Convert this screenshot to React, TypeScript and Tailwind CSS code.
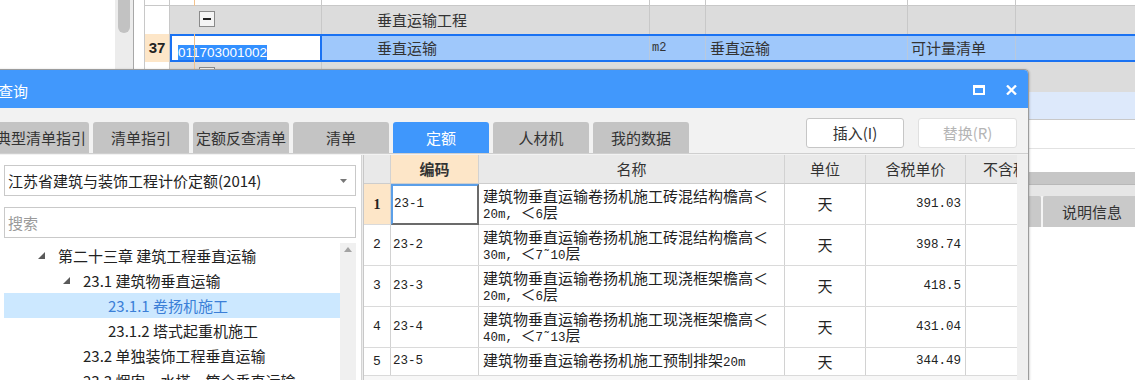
import React from "react";

type Seg = { t: string; m?: boolean };

const rows: { n: string; code: string; l1: string; l2: Seg[] | null; price: string }[] = [
  {
    n: "1",
    code: "23-1",
    l1: "建筑物垂直运输卷扬机施工砖混结构檐高＜",
    l2: [{ t: "20m, ", m: true }, { t: "＜" }, { t: "6", m: true }, { t: "层" }],
    price: "391.03",
  },
  {
    n: "2",
    code: "23-2",
    l1: "建筑物垂直运输卷扬机施工砖混结构檐高＜",
    l2: [{ t: "30m, ", m: true }, { t: "＜" }, { t: "7˜10", m: true }, { t: "层" }],
    price: "398.74",
  },
  {
    n: "3",
    code: "23-3",
    l1: "建筑物垂直运输卷扬机施工现浇框架檐高＜",
    l2: [{ t: "20m, ", m: true }, { t: "＜" }, { t: "6", m: true }, { t: "层" }],
    price: "418.5",
  },
  {
    n: "4",
    code: "23-4",
    l1: "建筑物垂直运输卷扬机施工现浇框架檐高＜",
    l2: [{ t: "40m, ", m: true }, { t: "＜" }, { t: "7˜13", m: true }, { t: "层" }],
    price: "431.04",
  },
  {
    n: "5",
    code: "23-5",
    l1: "建筑物垂直运输卷扬机施工预制排架",
    l2: null,
    price: "344.49",
  },
];

const tabs = ["典型清单指引", "清单指引", "定额反查清单", "清单", "定额", "人材机", "我的数据"];

function Tri() {
  return (
    <svg width="7" height="7" viewBox="0 0 7 7" className="shrink-0">
      <polygon points="7,0 7,7 0,7" fill="#5a5a5a" />
    </svg>
  );
}

function MinusBox() {
  return (
    <div className="w-[16px] h-[16px] border border-[#8a8a8a] bg-[#f4f4f4] flex items-center justify-center">
      <div className="w-[8px] h-[1.5px] bg-[#222]" />
    </div>
  );
}

export default function App() {
  return (
    <div className="relative w-[1135px] h-[380px] overflow-hidden bg-white font-['Noto_Sans_CJK_SC',sans-serif] text-[#222]">
      {/* ===== background application ===== */}
      <div className="flex h-full">
        <div className="w-[145px] shrink-0 flex">
          <div className="w-[115px] bg-white" />
          <div className="w-[18px] bg-[#ececec]">
            <div className="mx-[3px] h-[33px] bg-[#c2c2c2] rounded-b-[6px]" />
          </div>
          <div className="w-[1px] bg-[#a8a8a8]" />
          <div className="flex-1 bg-white border-r border-[#c8c8c8]" />
        </div>
        <div className="flex-1 flex flex-col relative">
          {/* tree line */}
          <div className="absolute left-[49px] top-0 w-[1px] h-[70px] bg-[#f3c28c]" />
          {/* row A */}
          <div className="h-[6px] flex border-b border-[#c8c8c8]">
            <div className="w-[25px] border-r border-[#c8c8c8]" />
            <div className="w-[152px] border-r border-[#c8c8c8]" />
            <div className="w-[328px] border-r border-[#c8c8c8]" />
            <div className="w-[56px] border-r border-[#c8c8c8]" />
            <div className="w-[202px] border-r border-[#c8c8c8]" />
            <div className="w-[108px] border-r border-[#c8c8c8]" />
            <div className="flex-1" />
          </div>
          {/* row B */}
          <div className="h-[28px] flex">
            <div className="w-[25px] bg-white border-r border-[#c8c8c8]" />
            <div className="w-[152px] bg-[#dcdcdc] border-r border-[#c8c8c8] pl-[29px] pt-[5px] relative">
              <MinusBox />
            </div>
            <div className="w-[328px] bg-[#dcdcdc] border-r border-[#c8c8c8] pl-[55px] flex items-center text-[15px] leading-[18px] text-[#333]">
              垂直运输工程
            </div>
            <div className="w-[56px] bg-[#dcdcdc] border-r border-[#c8c8c8]" />
            <div className="w-[202px] bg-[#dcdcdc] border-r border-[#c8c8c8]" />
            <div className="w-[108px] bg-[#dcdcdc] border-r border-[#c8c8c8]" />
            <div className="flex-1 bg-[#dcdcdc]" />
          </div>
          {/* row C (selected) */}
          <div className="h-[28px] flex">
            <div className="w-[25px] bg-[#fde6c8] border-r border-[#c8c8c8] flex items-center justify-center font-['Liberation_Sans',sans-serif] font-bold text-[15px] text-[#222]">
              37
            </div>
            <div className="flex-1 flex border-y-2 border-[#1a72f2] bg-[#9fc8fb]">
              <div className="w-[152px] bg-white border-x-2 border-[#1a72f2] pl-[6px] pt-[2px]">
                <span className="bg-[#3390ff] text-white font-['Liberation_Sans',sans-serif] text-[13.5px] leading-[15px] inline-block">
                  011703001002
                </span>
              </div>
              <div className="w-[328px] border-r border-[#b9c9dc] pl-[55px] flex items-center text-[15px] leading-[18px] text-[#333]">
                垂直运输
              </div>
              <div className="w-[56px] border-r border-[#b9c9dc] pl-[2px] flex items-center font-['Liberation_Mono',monospace] text-[12px] text-[#333]">
                m2
              </div>
              <div className="w-[202px] border-r border-[#b9c9dc] pl-[4px] flex items-center text-[15px] leading-[18px] text-[#333]">
                垂直运输
              </div>
              <div className="w-[108px] border-r border-[#b9c9dc] pl-[3px] flex items-center text-[15px] leading-[18px] text-[#333]">
                可计量清单
              </div>
              <div className="flex-1" />
            </div>
          </div>
          {/* row D */}
          <div className="h-[30px] flex">
            <div className="w-[25px] bg-white border-r border-[#c8c8c8]" />
            <div className="w-[152px] bg-[#dcdcdc] border-r border-[#c8c8c8] pl-[29px] pt-[5px]">
              <MinusBox />
            </div>
            <div className="flex-1 bg-[#dcdcdc]" />
          </div>
          {/* other rows visible on right */}
          <div className="h-[28px] bg-[#dde9fb] border-b border-[#c8c8c8]" />
          <div className="h-[29px] bg-white border-b border-[#e2e2e2]" />
          <div className="h-[23px] bg-white" />
          <div className="h-[13px] bg-[#c6c6c6] border-b border-[#b8b8b8]" />
          <div className="h-[11px] bg-[#e6e6e6]" />
          <div className="h-[31px] flex justify-end bg-[#e6e6e6]">
            <div className="w-[96px] bg-[#c9c9c9] rounded-t-[2px]" />
            <div className="w-[2px] bg-[#f4f4f4]" />
            <div className="w-[92px] bg-[#c9c9c9] rounded-tl-[2px] pl-[19px] flex items-center text-[15px] leading-[18px] text-[#333]">
              说明信息
            </div>
          </div>
          <div className="flex-1 bg-white" />
        </div>
      </div>

      {/* ===== dialog window ===== */}
      <div className="absolute left-[-8px] top-[69px] w-[1037px] h-[330px] bg-[#f2f2f2] border-t border-r border-[#9c9c9c] rounded-tr-[5px] overflow-hidden flex flex-col shadow-[1px_0_2px_rgba(0,0,0,0.15)]">
        {/* title bar */}
        <div className="h-[38px] shrink-0 bg-[#4198fc] flex items-center pl-[6px] pr-[11px]">
          <span className="text-white text-[15px] leading-[18px] pt-[4px]">查询</span>
          <div className="ml-auto flex items-center gap-[21px] pt-[2px]">
            <svg width="12" height="10" viewBox="0 0 12 10">
              <rect x="1" y="1.5" width="10" height="7.5" fill="none" stroke="white" strokeWidth="2" />
              <rect x="0" y="0" width="12" height="3" fill="white" />
            </svg>
            <svg width="11" height="10" viewBox="0 0 11 10">
              <path d="M1 0.5 L10 9.5 M10 0.5 L1 9.5" stroke="white" strokeWidth="2.3" />
            </svg>
          </div>
        </div>

        {/* tabs + buttons */}
        <div className="h-[45px] shrink-0 flex items-start">
          <div className="ml-[1px] mt-[14px] flex gap-[4px]">
            {tabs.map((t) => (
              <div
                key={t}
                className={
                  t === "定额"
                    ? "w-[96px] h-[31px] rounded-t-[3px] bg-[#3f97fc] text-white text-[15px] leading-[18px] flex items-center justify-center"
                    : "w-[96px] h-[31px] rounded-t-[3px] bg-[#c4c4c4] text-[#333] text-[15px] leading-[18px] flex items-center justify-center"
                }
              >
                {t}
              </div>
            ))}
          </div>
          <div className="ml-auto mr-[11px] mt-[10px] flex gap-[14px]">
            <div className="w-[98px] h-[30px] bg-white border border-[#c6c6c6] rounded-[3px] flex items-center justify-center text-[15px] leading-[18px] text-[#333]">
              插入(I)
            </div>
            <div className="w-[99px] h-[30px] bg-white border border-[#e0e0e0] rounded-[3px] flex items-center justify-center text-[15px] leading-[18px] text-[#b5b5b5]">
              替换(R)
            </div>
          </div>
        </div>

        {/* content */}
        <div className="flex-1 flex border-t border-[#cfcfcf] pt-[1px]">
          {/* left panel */}
          <div className="w-[370px] shrink-0 bg-white pl-[12px] pt-[10px] border-r border-[#d4d4d4]">
            <div className="w-[352px] h-[31px] border border-[#c9c9c9] bg-white flex items-center pl-[3px] pr-[8px]">
              <span className="text-[15px] leading-[18px] text-[#222]">江苏省建筑与装饰工程计价定额(2014)</span>
              <svg width="7" height="4" viewBox="0 0 7 4" className="ml-auto">
                <polygon points="0,0 7,0 3.5,4" fill="#777" />
              </svg>
            </div>
            <div className="mt-[11px] w-[352px] h-[31px] border border-[#c9c9c9] bg-white flex items-center pl-[3px]">
              <span className="text-[15px] leading-[18px] text-[#9a9a9a]">搜索</span>
            </div>
            <div className="mt-[5px] w-[352px] flex">
              <div className="w-[336px] flex flex-col text-[15px] leading-[18px]">
                <div className="h-[25px] flex items-center pl-[34px]">
                  <Tri />
                  <span className="ml-[13px] whitespace-nowrap">第二十三章 建筑工程垂直运输</span>
                </div>
                <div className="h-[25px] flex items-center pl-[59px]">
                  <Tri />
                  <span className="ml-[13px] whitespace-nowrap">23.1 建筑物垂直运输</span>
                </div>
                <div className="h-[25px] flex items-center pl-[104px] bg-[#cce8ff] text-[#3b7fd7]">
                  <span className="whitespace-nowrap">23.1.1 卷扬机施工</span>
                </div>
                <div className="h-[25px] flex items-center pl-[104px]">
                  <span className="whitespace-nowrap">23.1.2 塔式起重机施工</span>
                </div>
                <div className="h-[25px] flex items-center pl-[79px]">
                  <span className="whitespace-nowrap">23.2 单独装饰工程垂直运输</span>
                </div>
                <div className="h-[25px] flex items-center pl-[79px]">
                  <span className="whitespace-nowrap">23.3 烟囱、水塔、筒仓垂直运输</span>
                </div>
              </div>
              <div className="w-[16px] h-[160px] bg-[#f0f0f0] flex justify-center pt-[4px]">
                <svg width="8" height="5" viewBox="0 0 8 5">
                  <polygon points="4,0 8,5 0,5" fill="#a3a3a3" />
                </svg>
              </div>
            </div>
          </div>
          {/* splitter */}
          <div className="w-[2px] shrink-0 bg-[#ececec] border-r border-[#c8c8c8]" />
          {/* table */}
          <div className="w-[653px] shrink-0 overflow-hidden bg-[#f7f7f7]">
            <div className="w-[780px]">
              <div className="h-[29px] flex bg-[#e9e9e9] border-b border-[#cdcdcd] text-[15px] leading-[18px] text-[#333]">
                <div className="w-[27px] border-r border-[#d2d2d2]" />
                <div className="w-[88px] border-r border-[#d2d2d2] bg-[#fde6c8] font-bold flex items-center justify-center">
                  编码
                </div>
                <div className="w-[306px] border-r border-[#d2d2d2] flex items-center justify-center">名称</div>
                <div className="w-[81px] border-r border-[#d2d2d2] flex items-center justify-center">单位</div>
                <div className="w-[100px] border-r border-[#d2d2d2] flex items-center justify-center">含税单价</div>
                <div className="w-[110px] border-r border-[#d2d2d2] flex items-center justify-center">不含税单价</div>
              </div>
              {rows.map((r, i) => (
                <div
                  key={r.n}
                  className={
                    (r.l2 ? "h-[41px]" : "h-[28px]") +
                    " flex bg-white border-b border-[#dadada] text-[15px] text-[#222]"
                  }
                >
                  <div
                    className={
                      i === 0
                        ? "w-[27px] border-r border-[#d2d2d2] bg-[#fde6c8] flex items-center justify-center font-['Liberation_Serif',serif] font-bold text-[14px]"
                        : "w-[27px] border-r border-[#d2d2d2] flex items-center justify-center font-['Liberation_Mono',monospace] text-[13px]"
                    }
                  >
                    {r.n}
                  </div>
                  <div
                    className={
                      i === 0
                        ? "w-[88px] border-2 border-l-[#5b9fe8] border-t-[#5b9fe8] border-r-[#6b6b6b] border-b-[#6b6b6b] -mb-[1px] flex items-center pl-[1px] font-['Liberation_Mono',monospace] text-[12.5px]"
                        : "w-[88px] border-r border-[#d2d2d2] flex items-center pl-[2px] font-['Liberation_Mono',monospace] text-[12.5px]"
                    }
                  >
                    {r.code}
                  </div>
                  <div
                    className={
                      r.l2
                        ? "w-[306px] border-r border-[#d2d2d2] pl-[4px] pt-[4px] leading-[16px] whitespace-nowrap"
                        : "w-[306px] border-r border-[#d2d2d2] pl-[4px] flex items-center leading-[16px] whitespace-nowrap"
                    }
                  >
                    {r.l2 ? (
                      <>
                        <div>{r.l1}</div>
                        <div>
                          {r.l2.map((s, k) =>
                            s.m ? (
                              <span key={k} className="font-['Liberation_Mono',monospace] text-[12.5px] whitespace-pre">
                                {s.t}
                              </span>
                            ) : (
                              <span key={k}>{s.t}</span>
                            )
                          )}
                        </div>
                      </>
                    ) : (
                      <div>
                        {r.l1}
                        <span className="font-['Liberation_Mono',monospace] text-[12.5px]">20m</span>
                      </div>
                    )}
                  </div>
                  <div className="w-[81px] border-r border-[#d2d2d2] flex items-center justify-center leading-[16px]">天</div>
                  <div className="w-[100px] border-r border-[#d2d2d2] flex items-center justify-end pr-[4px] font-['Liberation_Mono',monospace] text-[12.5px]">
                    {r.price}
                  </div>
                  <div className="w-[110px] border-r border-[#d2d2d2]" />
                </div>
              ))}
            </div>
          </div>
          {/* right gutter */}
          <div className="flex-1 bg-[#efefef]" />
        </div>
      </div>
    </div>
  );
}
